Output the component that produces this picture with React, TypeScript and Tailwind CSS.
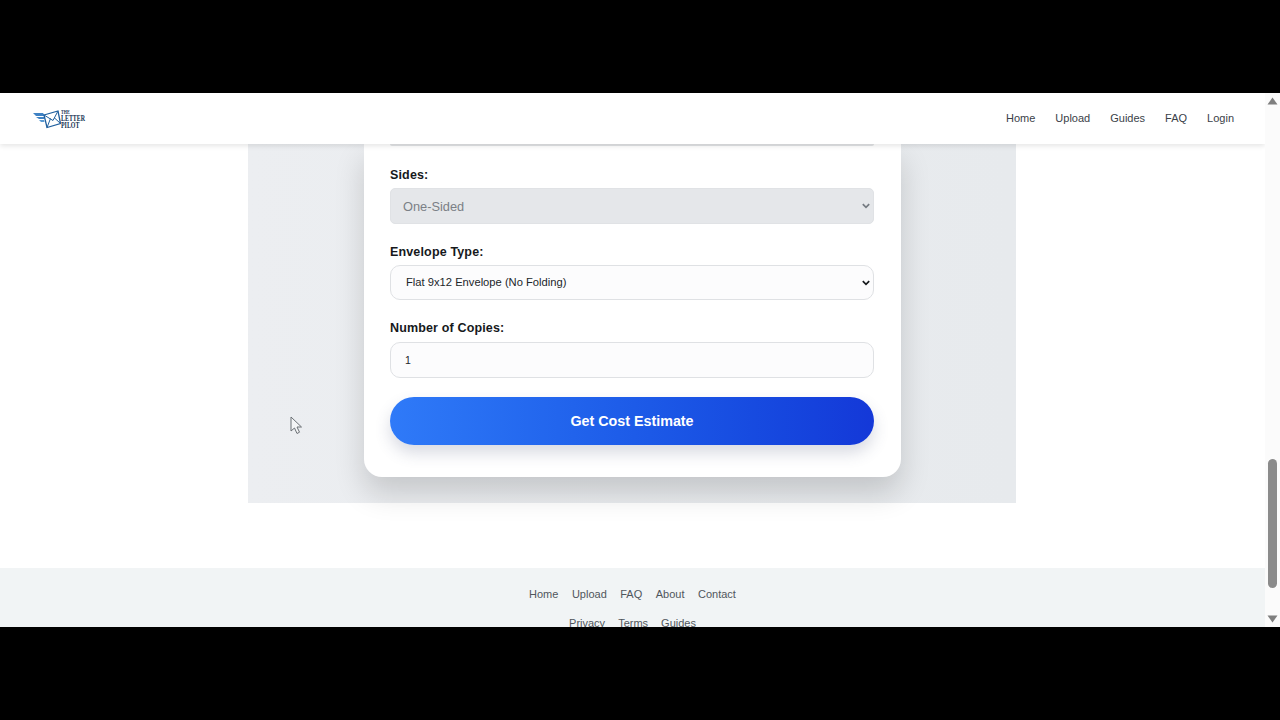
import React from "react";

const font = { fontFamily: '"Liberation Sans", Arial, sans-serif' };

function Logo() {
  return (
    <div className="flex items-center mt-[1px]">
      <svg width="28" height="19" viewBox="0 0 28 19" className="block shrink-0">
        <path d="M0 3 L10 3 L12 6 L3 6 Z" fill="#3f82c4" />
        <path d="M3 7 L11 7 L11.5 9 L6 9 Z" fill="#3f82c4" />
        <path d="M6 10 L11 10 L11.5 12 L8 12 Z" fill="#5a9ad2" />
        <path d="M11 5 L25 1 L27.5 13.5 L14 17.5 Z" fill="#fff" stroke="#1f5f9e" strokeWidth="1.3" />
        <path d="M11 5 L20 10.5 L25 1 M14 17.5 L17.5 8.5 M27.5 13.5 L21 7.5" fill="none" stroke="#1f5f9e" strokeWidth="1" />
      </svg>
      <div className="w-[24px] flex flex-col text-[#14304f] font-bold origin-left scale-x-[0.74]" style={{ fontFamily: '"Liberation Serif", serif' }}>
        <span className="text-[5.5px] leading-[5px]">THE</span>
        <span className="text-[8px] leading-[7px] whitespace-nowrap">LETTER</span>
        <span className="text-[8px] leading-[7px] whitespace-nowrap">PILOT</span>
      </div>
    </div>
  );
}

function Nav() {
  return (
    <nav className="relative z-20 h-[51px] shrink-0 bg-white flex items-center justify-between pl-[33px] pr-[31px] shadow-[0_2px_5px_rgba(0,0,0,0.1)]">
      <Logo />
      <div className="flex items-center gap-[20px] text-[11px] text-[#3a4148] -mt-[1px]">
        <a>Home</a>
        <a>Upload</a>
        <a>Guides</a>
        <a>FAQ</a>
        <a>Login</a>
      </div>
    </nav>
  );
}

function Label({ children }: { children: React.ReactNode }) {
  return <label className="block text-[12.5px] leading-[16px] font-bold text-[#16191c] tracking-[0.15px]">{children}</label>;
}

function Chevron({ color }: { color: string }) {
  return (
    <svg width="8" height="6" viewBox="0 0 8 6" className="absolute right-[4px] top-1/2 -translate-y-1/2 pointer-events-none">
      <path d="M0.8 1.2 L4 4.4 L7.2 1.2" fill="none" stroke={color} strokeWidth="1.7" />
    </svg>
  );
}

function Card() {
  return (
    <div className="w-[537px] h-[333px] bg-white rounded-b-[18px] shadow-[0_16px_30px_rgba(0,0,0,0.16)] pl-[26px] pr-[27px] flex flex-col">
      <div className="h-[2px] bg-[#e2e4e6] rounded-b" />
      <div className="mt-[21px]">
        <Label>Sides:</Label>
      </div>
      <div className="relative mt-[5px]">
        <select
          disabled
          defaultValue="one"
          className="block w-full h-[36px] appearance-none opacity-100 rounded-[5px] border border-[#e0e2e5] bg-[#e5e7ea] pl-[12px] pr-[16px] pt-[1px] text-[12.8px] text-[#7b8086]"
        >
          <option value="one">One-Sided</option>
        </select>
        <Chevron color="#757b82" />
      </div>
      <div className="mt-[20px]">
        <Label>Envelope Type:</Label>
      </div>
      <div className="relative mt-[5px]">
        <select
          defaultValue="flat"
          className="block w-full h-[35px] appearance-none rounded-[10px] border border-[#dfe1e4] bg-[#fcfcfd] pl-[15px] pr-[16px] text-[11.2px] text-[#22262a]"
        >
          <option value="flat">Flat 9x12 Envelope (No Folding)</option>
        </select>
        <Chevron color="#16191c" />
      </div>
      <div className="mt-[20px]">
        <Label>Number of Copies:</Label>
      </div>
      <input
        readOnly
        value="1"
        className="mt-[6px] w-full h-[36px] rounded-[10px] border border-[#dfe1e4] bg-[#fcfcfd] pl-[14px] pr-[12px] pb-[1px] text-[10.5px] text-[#22262a]"
      />
      <button className="mt-[19px] w-full h-[48px] pt-[1px] rounded-full bg-gradient-to-r from-[#2f7af8] to-[#1438d8] text-white text-[14.3px] font-bold shadow-[0_8px_16px_rgba(60,70,110,0.2)]">
        Get Cost Estimate
      </button>
    </div>
  );
}

function Footer() {
  return (
    <footer className="h-[59px] shrink-0 bg-[#f1f4f5] pt-[19px] text-[11px] text-[#50565c] flex flex-col items-center">
      <div className="flex gap-[13.5px] leading-[14px]">
        <a>Home</a>
        <a>Upload</a>
        <a>FAQ</a>
        <a>About</a>
        <a>Contact</a>
      </div>
      <div className="flex gap-[13px] mt-[15px] leading-[14px]">
        <a>Privacy</a>
        <a>Terms</a>
        <a>Guides</a>
      </div>
    </footer>
  );
}

function Scrollbar() {
  return (
    <div className="w-[15px] shrink-0 bg-[#fbfbfb] flex flex-col items-center">
      <svg width="11" height="8" viewBox="0 0 11 8" className="mt-[4px] shrink-0">
        <path d="M5.5 0.5 L10.5 7.5 L0.5 7.5 Z" fill="#7f7f7f" />
      </svg>
      <div className="mt-[354px] w-[9px] h-[129px] shrink-0 rounded-full bg-[#8b8b8b]" />
      <svg width="11" height="8" viewBox="0 0 11 8" className="mt-[27px] shrink-0">
        <path d="M5.5 7.5 L10.5 0.5 L0.5 0.5 Z" fill="#7f7f7f" />
      </svg>
    </div>
  );
}

export default function App() {
  return (
    <div className="relative w-[1280px] h-[720px] overflow-hidden bg-black flex flex-col" style={font}>
      <div className="h-[93px] shrink-0 bg-black" />
      <div className="h-[534px] shrink-0 flex overflow-hidden bg-white">
        <div className="flex-1 min-w-0 flex flex-col overflow-hidden">
          <Nav />
          <main className="flex-1 min-h-0 flex flex-col items-center pr-[1px]">
            <section className="w-[768px] h-[359px] shrink-0 pl-[1px] bg-gradient-to-r from-[#eceef1] to-[#e7eaed] flex justify-center">
              <Card />
            </section>
          </main>
          <Footer />
        </div>
        <Scrollbar />
      </div>
      <div className="h-[93px] shrink-0 bg-black" />
      <svg width="14" height="20" viewBox="0 0 14 20" className="absolute left-[290px] top-[416px]">
        <path d="M1 1 L1 15 L4.5 12 L7 17.5 L9.5 16.2 L7 11 L11.5 11 Z" fill="#f4f5f6" stroke="#6b7075" strokeWidth="1" strokeLinejoin="round" />
      </svg>
    </div>
  );
}
